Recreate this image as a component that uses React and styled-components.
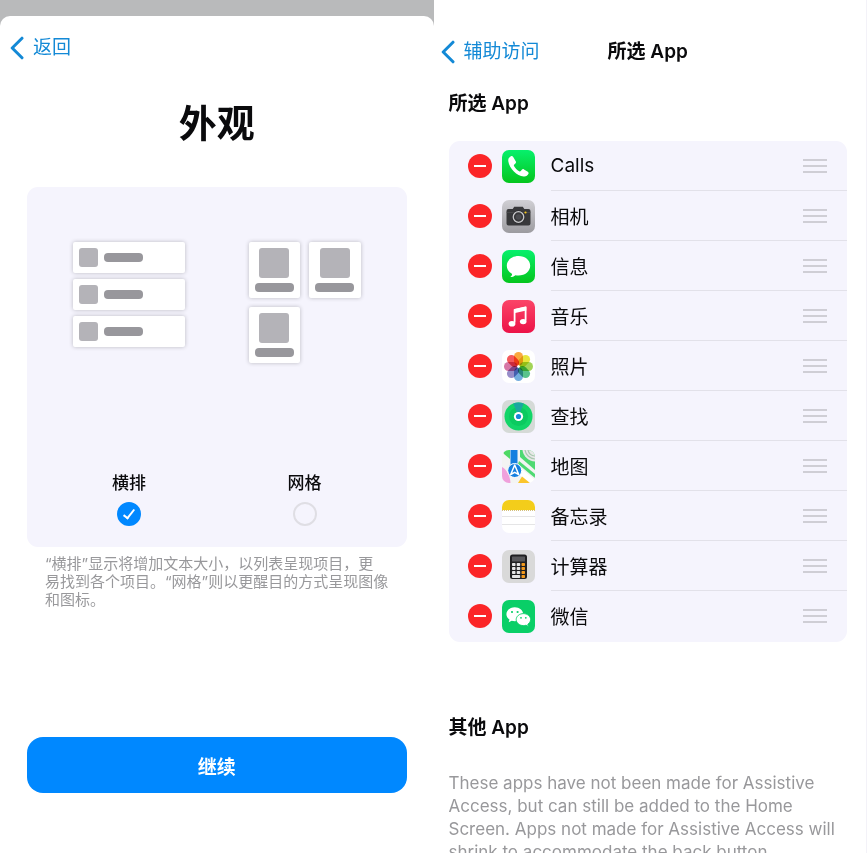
import React, { useState } from 'react';
import styled, { createGlobalStyle } from 'styled-components';

const variables = {
  color: {
    blue: '#0088ff',
    link: '#1389d6',
    red: '#fb2528',
    panel: '#f5f4fd',
    line: '#e2e1e9',
    backdrop: '#b9babb',
    gray: '#98989b',
    tile: '#b4b3b8',
    bar: '#98979c',
    handle: '#cfced5',
  },
  typo: {
    sm: '15px',
    md: '17px',
    lg: '19px',
    xl: '38px',
  },
};

const GlobalStyle = createGlobalStyle`
  *, *::before, *::after {
    box-sizing: border-box;
  }
  body {
    margin: 0;
    background: #fff;
    color: #0a0a0c;
    font-family: Inter, "Noto Sans CJK SC", sans-serif;
  }
  h1, h2, p, ul {
    margin: 0;
    padding: 0;
  }
`;

const Page = styled.div`
  display: grid;
  grid-template-columns: 1fr 1fr;
  grid-template-rows: 100%;
  height: 100vh;
  overflow: hidden;
`;

const Backdrop = styled.section`
  display: flex;
  padding-top: 16px;
  background: ${variables.color.backdrop};
`;

const Sheet = styled.div`
  flex: 1;
  display: flex;
  flex-direction: column;
  padding: 0 27px;
  background: #fff;
  border-radius: 10px 10px 0 0;
`;

const SheetNav = styled.nav`
  display: flex;
  align-items: center;
  height: 64px;
  margin-left: -17px;
`;

const BackLink = styled.a`
  display: inline-flex;
  align-items: center;
  gap: 9px;
  color: ${variables.color.link};
  font-size: ${variables.typo.lg};
  line-height: 24px;
  text-decoration: none;
`;

const SheetTitle = styled.h1`
  margin-top: 15px;
  font-size: ${variables.typo.xl};
  font-weight: 600;
  line-height: 56px;
  text-align: center;
`;

const Picker = styled.div`
  display: flex;
  justify-content: space-between;
  height: 360px;
  margin-top: 36px;
  padding: 55px 46px 21px;
  border-radius: 11px;
  background: ${variables.color.panel};
`;

const Option = styled.label`
  display: flex;
  flex-direction: column;
  align-items: center;
  width: 112px;
  font-size: ${variables.typo.md};
  font-weight: 500;
  line-height: 24px;
  cursor: pointer;
`;

const OptionName = styled.span`
  margin-top: auto;
`;

const Radio = styled.input`
  appearance: none;
  display: flex;
  justify-content: center;
  width: 24px;
  height: 24px;
  margin: 7px 0 0;
  border: 2px solid #dfdee4;
  border-radius: 50%;

  &:checked {
    border-color: ${variables.color.blue};
    background: ${variables.color.blue};
  }

  &:checked::after {
    content: '';
    width: 6px;
    height: 12px;
    margin-top: 3px;
    border: solid #fff;
    border-width: 0 2px 2px 0;
    transform: rotate(38deg);
  }
`;

const Preview = styled.span`
  display: grid;
  grid-template-columns: ${({ $columns }) => `repeat(${$columns}, 1fr)`};
  gap: ${({ $gap }) => $gap};
  width: 100%;
`;

const MiniCard = styled.span`
  display: flex;
  flex-direction: ${({ $stacked }) => ($stacked ? 'column' : 'row')};
  align-items: center;
  gap: ${({ $stacked }) => ($stacked ? '5px' : '6px')};
  padding: 6px;
  border-radius: 2px;
  background: #fff;
  box-shadow: 0 0 4px rgba(0, 0, 0, 0.24);
`;

const MiniTile = styled.span`
  width: ${({ $size }) => $size};
  height: ${({ $size }) => $size};
  border-radius: 3px;
  background: ${variables.color.tile};
`;

const MiniBar = styled.span`
  width: 39px;
  height: 9px;
  border-radius: 4px;
  background: ${variables.color.bar};
`;

const Hint = styled.p`
  margin: 8px 0 0 18px;
  color: ${variables.color.gray};
  font-size: ${variables.typo.sm};
  line-height: 18px;
  white-space: nowrap;
`;

const ContinueButton = styled.button`
  height: 56px;
  margin: auto 0 60px;
  border: 0;
  border-radius: 16px;
  background: ${variables.color.blue};
  color: #fff;
  font-family: inherit;
  font-size: ${variables.typo.lg};
  font-weight: 600;
  cursor: pointer;
`;

const Settings = styled.section`
  padding: 30px 19px 0 15px;
  border-right: 1px solid #f3f2f8;
`;

const SettingsNav = styled.nav`
  display: grid;
  grid-template-columns: 1fr auto 1fr;
  align-items: center;
  height: 44px;

  ${BackLink} {
    margin-left: -8px;
  }
`;

const NavTitle = styled.h1`
  font-size: ${variables.typo.lg};
  font-weight: 600;
  line-height: 24px;
`;

const GroupTitle = styled.h2`
  margin-top: ${({ $top }) => $top};
  font-size: ${variables.typo.lg};
  font-weight: 600;
  line-height: 24px;
`;

const AppList = styled.ul`
  margin-top: 25px;
  padding-bottom: 1px;
  border-radius: 11px;
  background: ${variables.color.panel};
  list-style: none;
`;

const AppRow = styled.li`
  display: flex;
  align-items: center;
  height: 50px;
  padding-left: 19px;
`;

const RemoveButton = styled.button`
  display: flex;
  align-items: center;
  justify-content: center;
  width: 24px;
  height: 24px;
  margin-right: 10px;
  padding: 0;
  border: 0;
  border-radius: 50%;
  background: ${variables.color.red};
  cursor: pointer;

  &::before {
    content: '';
    width: 12px;
    height: 2px;
    background: #fff;
  }
`;

const AppBody = styled.div`
  flex: 1;
  display: flex;
  align-items: center;
  justify-content: space-between;
  align-self: stretch;
  margin-left: 16px;
  padding-right: 20px;
  border-bottom: 1px solid ${variables.color.line};
  font-size: ${variables.typo.lg};

  ${AppRow}:last-child & {
    border-color: transparent;
  }
`;

const DragHandle = styled.button`
  display: flex;
  flex-direction: column;
  justify-content: center;
  width: 24px;
  height: 14px;
  padding: 0;
  border: solid ${variables.color.handle};
  border-width: 2px 0;
  background: none;
  cursor: grab;

  &::before {
    content: '';
    height: 2px;
    background: ${variables.color.handle};
  }
`;

const Note = styled.p`
  margin-top: 32px;
  color: ${variables.color.gray};
  font-size: ${variables.typo.md};
  line-height: 23px;
`;

const AppIcon = styled.svg`
  flex: none;
  width: 33px;
  height: 33px;
  border-radius: 7px;
`;

const Petal = styled.rect`
  mix-blend-mode: multiply;
`;

const Chevron = () => (
  <svg width="14" height="24" viewBox="0 0 14 24" fill="none" aria-hidden="true">
    <path d="M12 2.200 2.200 12l9.800 9.800" stroke={variables.color.link} strokeWidth="3" strokeLinecap="round" strokeLinejoin="round" />
  </svg>
);

const CallsArt = () => (
  <>
    <rect width="33" height="33" fill="url(#green)" />
    <path
      d="M9 6.200c-1.800.8-3 2.600-2.700 5 .5 3.800 2.800 7.600 5.600 10.300 2.800 2.700 6.300 4.700 9.800 5 2.300.2 4-1 4.800-2.700.3-.8 0-1.500-.7-2l-3.800-2.400c-.8-.5-1.700-.3-2.200.4l-1 1.200c-.4.5-1 .6-1.600.3-2.200-1.200-4-3.200-5.200-5.300-.3-.6-.2-1.200.3-1.600l1.100-1c.7-.6.8-1.400.3-2.200L11.200 7c-.5-.8-1.300-1.100-2.200-.8z"
      fill="#fff"
    />
  </>
);

const CameraArt = () => (
  <>
    <rect width="33" height="33" fill="url(#silver)" />
    <path d="M6.500 9h4.200l1.500-2.200h8.600L22.300 9h4.200a2 2 0 0 1 2 2v12.500a2 2 0 0 1-2 2h-20a2 2 0 0 1-2-2V11a2 2 0 0 1 2-2z" fill="#38383b" />
    <path d="M4.500 12.500h24" stroke="#57575b" strokeWidth="0.6" />
    <circle cx="16.5" cy="17" r="6.6" fill="#29292c" />
    <circle cx="16.5" cy="17" r="5.300" fill="#38383b" stroke="#c9c9cc" strokeWidth="1.3" />
    <circle cx="16.5" cy="17" r="2.8" fill="#4b4b50" />
    <circle cx="23.5" cy="12.500" r="1.1" fill="#f5c518" />
  </>
);

const MessagesArt = () => (
  <>
    <rect width="33" height="33" fill="url(#green)" />
    <path d="M16.5 6C9.800 6 4.800 10.200 4.800 15.700c0 3.500 2.100 6.500 5.300 8.200 0 1.300-.8 2.400-1.900 3.200 2 0 3.900-.7 5.200-1.900 1 .2 2 .3 3.100.3 6.700 0 11.700-4.300 11.700-9.800S23.200 6 16.500 6z" fill="#fff" />
  </>
);

const MusicArt = () => (
  <>
    <rect width="33" height="33" fill="url(#pink)" />
    <path d="M12.600 22.500V9.800l11-2.400v13" fill="none" stroke="#fff" strokeWidth="1.8" strokeLinejoin="round" />
    <path d="M12 9.200 24.300 6.600v4L12 13.200z" fill="#fff" />
    <ellipse cx="10" cy="23.800" rx="3.400" ry="2.800" fill="#fff" />
    <ellipse cx="21.200" cy="21.600" rx="3.300" ry="2.700" fill="#fff" />
  </>
);

const petals = ['#f99a1c', '#e4e01a', '#93cc3a', '#3cb878', '#5a9fd8', '#8579c0', '#cf5f96', '#f23c40'];

const PhotosArt = () => (
  <>
    <rect width="33" height="33" fill="#fff" />
    {petals.map((color, i) => (
      <Petal
        key={color}
        x="12"
        y="2"
        width="9"
        height="13.500"
        rx="4.500"
        fill={color}
        fillOpacity="0.85"
        transform={`rotate(${i * 45} 16.5 16.5)`}
      />
    ))}
    <circle cx="16.5" cy="16.5" r="1.2" fill="#fff" />
  </>
);

const FindArt = () => (
  <>
    <rect width="33" height="33" fill="#d5dad7" />
    <circle cx="16.5" cy="16.5" r="14" fill="#12d568" />
    <circle cx="16.5" cy="16.5" r="9.500" fill="#0bca60" />
    <path d="M16.5 16.5 11.300 3.500a14 14 0 0 1 10.400 0z" fill="#1aa7a0" />
    <circle cx="16.5" cy="16.5" r="4.600" fill="#fff" />
    <circle cx="16.5" cy="16.5" r="2.600" fill="#1686d8" />
  </>
);

const MapsArt = () => (
  <>
    <rect width="33" height="33" fill="#f3f4f3" />
    <path d="M0 0h8v9L2 4z" fill="#4ed964" />
    <path d="M18 0h15v20L18 7z" fill="#4ed973" />
    <path d="M20.500 0A13 13 0 0 0 33 11.500V0z" fill="#e8e8e8" />
    <path d="M23 0a10.500 10.500 0 0 0 10 9M26 0a7.500 7.500 0 0 0 7 6" fill="none" stroke="#a9c7b0" strokeWidth="1.2" />
    <path d="M15 15 33 30v3h-6L14 22z" fill="#fff" />
    <path d="M17 11 33 24v4L16 14z" fill="#4ed973" />
    <path d="M0 17c4 2 8 8 8.500 16H0z" fill="#f0a0dc" />
    <path d="M20 26.500 28 33H16z" fill="#fbc52d" />
    <path d="M8.500 0h7v16h-7z" fill="#147fe0" />
    <circle cx="12.700" cy="20.500" r="7" fill="#147fe0" stroke="#fff" />
    <path d="m12.700 15 4 9.500-4-2.200-4 2.200z" fill="none" stroke="#fff" strokeWidth="1.5" strokeLinejoin="round" />
  </>
);

const NotesArt = () => (
  <>
    <rect width="33" height="33" fill="#fff" />
    <rect width="33" height="10" fill="#f3cd1b" />
    <path d="M0 10.500h33" stroke="#c9b05a" strokeWidth="0.8" strokeDasharray="1 1" />
    <path d="M0 16.500h33M0 24.500h33" stroke="#dedee0" strokeWidth="0.8" />
  </>
);

const CalculatorArt = () => (
  <>
    <rect width="33" height="33" fill="#d9d9d9" />
    <rect x="8" y="4.500" width="17" height="24.500" rx="2.500" fill="#202022" />
    <rect x="10" y="6.500" width="13" height="5" rx="0.5" fill="#58585b" />
    {[13, 17, 21, 25].map((y, i) => (
      <g key={y}>
        {i < 3 && <rect x="10" y={y} width="3.500" height="3" rx="0.8" fill="#e6e6e6" />}
        {i < 3 && <rect x="14.700" y={y} width="3.500" height="3" rx="0.8" fill="#e6e6e6" />}
        <rect x="19.500" y={y} width="3.500" height="3" rx="0.8" fill="#f39a1e" />
      </g>
    ))}
    <rect x="10" y="25" width="8.200" height="3" rx="0.8" fill="#e6e6e6" />
  </>
);

const WechatArt = () => (
  <>
    <rect width="33" height="33" fill="#09cf67" />
    <path d="M12.800 7.200c-4.700 0-8.400 3.100-8.400 7 0 2.200 1.200 4.100 3.100 5.400l-.8 2.600 3-1.500c1 .3 2 .5 3.100.5 4.600 0 8.400-3.100 8.400-7s-3.800-7-8.400-7z" fill="#fff" />
    <path d="M21.400 13.600c-4 0-7.200 2.700-7.200 6s3.200 6 7.200 6c.9 0 1.800-.1 2.600-.4l2.500 1.300-.7-2.200c1.600-1.100 2.800-2.800 2.800-4.700 0-3.300-3.200-6-7.200-6z" fill="#fff" stroke="#09cf67" strokeWidth="0.9" />
    <circle cx="10" cy="12" r="1.1" fill="#09cf67" />
    <circle cx="15.600" cy="12" r="1.1" fill="#09cf67" />
    <circle cx="19" cy="17.800" r="0.9" fill="#09cf67" />
    <circle cx="23.800" cy="17.800" r="0.9" fill="#09cf67" />
  </>
);

const IconDefs = () => (
  <svg width="0" height="0" display="block" aria-hidden="true">
    <defs>
      <linearGradient id="green" x2="0" y2="1">
        <stop stopColor="#07f06c" />
        <stop offset="1" stopColor="#05c51d" />
      </linearGradient>
      <linearGradient id="silver" x2="0" y2="1">
        <stop stopColor="#d0cfd4" />
        <stop offset="1" stopColor="#9c9ba0" />
      </linearGradient>
      <linearGradient id="pink" x2="0" y2="1">
        <stop stopColor="#fb4468" />
        <stop offset="1" stopColor="#ec1348" />
      </linearGradient>
    </defs>
  </svg>
);

const apps = [
  { name: 'Calls', Art: CallsArt },
  { name: '相机', Art: CameraArt },
  { name: '信息', Art: MessagesArt },
  { name: '音乐', Art: MusicArt },
  { name: '照片', Art: PhotosArt },
  { name: '查找', Art: FindArt },
  { name: '地图', Art: MapsArt },
  { name: '备忘录', Art: NotesArt },
  { name: '计算器', Art: CalculatorArt },
  { name: '微信', Art: WechatArt },
];

const RowsPreview = () => (
  <Preview $columns={1} $gap="6px">
    {[0, 1, 2].map((n) => (
      <MiniCard key={n}>
        <MiniTile $size="19px" />
        <MiniBar />
      </MiniCard>
    ))}
  </Preview>
);

const GridPreview = () => (
  <Preview $columns={2} $gap="9px">
    {[0, 1, 2].map((n) => (
      <MiniCard key={n} $stacked>
        <MiniTile $size="30px" />
        <MiniBar />
      </MiniCard>
    ))}
  </Preview>
);

const layouts = [
  { id: 'rows', name: '横排', Art: RowsPreview },
  { id: 'grid', name: '网格', Art: GridPreview },
];

const AppearanceSheet = () => {
  const [layout, setLayout] = useState('rows');

  return (
    <Backdrop>
      <Sheet>
        <SheetNav>
          <BackLink href="#back">
            <Chevron />
            返回
          </BackLink>
        </SheetNav>
        <SheetTitle>外观</SheetTitle>
        <Picker role="radiogroup" aria-label="外观">
          {layouts.map(({ id, name, Art }) => (
            <Option key={id}>
              <Art />
              <OptionName>{name}</OptionName>
              <Radio
                type="radio"
                name="layout"
                value={id}
                checked={layout === id}
                onChange={() => setLayout(id)}
              />
            </Option>
          ))}
        </Picker>
        <Hint>
          “横排”显示将增加文本大小，以列表呈现项目，更
          <br />
          易找到各个项目。“网格”则以更醒目的方式呈现图像
          <br />
          和图标。
        </Hint>
        <ContinueButton type="button">继续</ContinueButton>
      </Sheet>
    </Backdrop>
  );
};

const SelectedApps = () => (
  <Settings>
    <SettingsNav>
      <BackLink href="#accessibility">
        <Chevron />
        辅助访问
      </BackLink>
      <NavTitle>所选 App</NavTitle>
    </SettingsNav>
    <GroupTitle $top="18px">所选 App</GroupTitle>
    <AppList>
      {apps.map(({ name, Art }) => (
        <AppRow key={name}>
          <RemoveButton type="button" aria-label={`移除 ${name}`} />
          <AppIcon viewBox="0 0 33 33" aria-hidden="true">
            <Art />
          </AppIcon>
          <AppBody>
            {name}
            <DragHandle type="button" aria-label={`重新排序 ${name}`} />
          </AppBody>
        </AppRow>
      ))}
    </AppList>
    <GroupTitle $top="74px">其他 App</GroupTitle>
    <Note>
      These apps have not been made for Assistive Access, but can still be added
      to the Home Screen. Apps not made for Assistive Access will shrink to
      accommodate the back button.
    </Note>
  </Settings>
);

const App = () => (
  <>
    <GlobalStyle />
    <IconDefs />
    <Page>
      <AppearanceSheet />
      <SelectedApps />
    </Page>
  </>
);

export default App;
